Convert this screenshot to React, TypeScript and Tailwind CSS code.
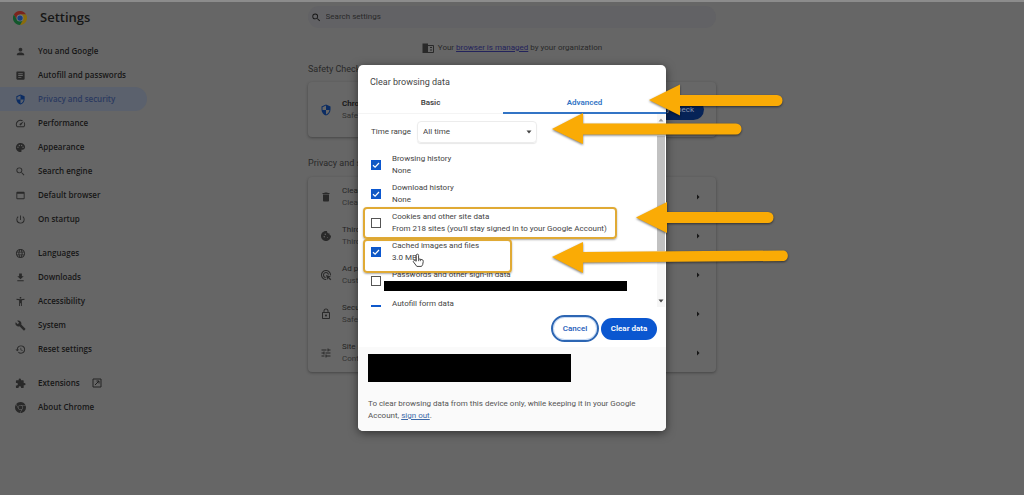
import type { ReactNode } from "react";
import type { IconType } from "react-icons";
import {
  MdAccessibilityNew,
  MdAdsClick,
  MdArrowRight,
  MdArticle,
  MdBuild,
  MdCookie,
  MdDelete,
  MdExtension,
  MdFileDownload,
  MdHistory,
  MdLanguage,
  MdLockOutline,
  MdPalette,
  MdPerson,
  MdPowerSettingsNew,
  MdSearch,
  MdSecurity,
  MdSpeed,
  MdTune,
  MdWebAsset,
} from "react-icons/md";
import { SiGooglechrome } from "react-icons/si";

type NavEntry = { label: string; icon: IconType; active?: boolean; external?: boolean };

const navGroups: NavEntry[][] = [
  [
    { label: "You and Google", icon: MdPerson },
    { label: "Autofill and passwords", icon: MdArticle },
    { label: "Privacy and security", icon: MdSecurity, active: true },
    { label: "Performance", icon: MdSpeed },
    { label: "Appearance", icon: MdPalette },
    { label: "Search engine", icon: MdSearch },
    { label: "Default browser", icon: MdWebAsset },
    { label: "On startup", icon: MdPowerSettingsNew },
  ],
  [
    { label: "Languages", icon: MdLanguage },
    { label: "Downloads", icon: MdFileDownload },
    { label: "Accessibility", icon: MdAccessibilityNew },
    { label: "System", icon: MdBuild },
    { label: "Reset settings", icon: MdHistory },
  ],
  [
    { label: "Extensions", icon: MdExtension, external: true },
    { label: "About Chrome", icon: SiGooglechrome },
  ],
];

const privacyRows = [
  { title: "Clear", text: "Clear", icon: MdDelete },
  { title: "Third", text: "Third", icon: MdCookie },
  { title: "Ad priv", text: "Custom", icon: MdAdsClick },
  { title: "Secur", text: "Safe", icon: MdLockOutline },
  { title: "Site s", text: "Contr", icon: MdTune },
];

const ChromeLogo = () => (
  <svg viewBox="0 0 48 48" className="size-[14px]" aria-hidden="true">
    <path d="M24 12H44.8A24 24 0 0 0 3.2 12L13.6 30Z" fill="#7b241d" />
    <path d="M34.4 30 24 48A24 24 0 0 0 44.8 12H24Z" fill="#8a6c0c" />
    <path d="M13.6 30 3.2 12A24 24 0 0 0 24 48L34.4 30Z" fill="#12572b" />
    <circle cx="24" cy="24" r="12" fill="#73777c" />
    <circle cx="24" cy="24" r="9" fill="#173f7c" />
  </svg>
);

const ExternalIcon = () => (
  <svg viewBox="0 0 10 10" className="size-[10px]" fill="none" stroke="#222222" aria-hidden="true">
    <path d="M1 1h8v8H1zM3 7l4-4M4.500 3H7v2.500" />
  </svg>
);

const BuildingIcon = () => (
  <svg viewBox="0 0 12 12" className="size-3" aria-hidden="true">
    <path d="M0.5 1.5H6V11H0.500z" fill="#292929" />
    <path d="M6 3.500h5.500V10.500H6M8 5.500h2M8 8h2" fill="none" stroke="#292929" />
  </svg>
);

const Sidebar = () => (
  <aside className="w-[308px] shrink-0">
    <div className="flex h-8 items-center gap-[13px] pl-[13px]">
      <ChromeLogo />
      <h1 className="font-['Open_Sans',sans-serif] text-[13px] font-semibold">Settings</h1>
    </div>
    <nav className="flex w-[147px] flex-col gap-[10px] pt-[5px]">
      {navGroups.map((group, i) => (
        <ul key={i}>
          {group.map(({ label, icon: Icon, active, external }) => (
            <li key={label}>
              <a
                href="#"
                className={
                  active
                    ? "flex h-6 items-center gap-3 rounded-r-xl bg-[#5b616d] pl-[15px] font-['Open_Sans',sans-serif] font-semibold text-[#2b3a60]"
                    : "flex h-6 items-center gap-3 pl-[15px] font-['Open_Sans',sans-serif] font-semibold"
                }
              >
                <Icon className={active ? "size-[11px] text-[#0b2c63]" : "size-[11px] text-[#292929]"} />
                {label}
                {external && <ExternalIcon />}
              </a>
            </li>
          ))}
        </ul>
      ))}
    </nav>
  </aside>
);

const Main = () => (
  <main className="w-[408px] shrink-0 pt-1">
    <label className="flex h-[22px] items-center gap-1 rounded-full bg-[#626265] pl-[3px]">
      <MdSearch className="size-[11px]" />
      <input
        type="text"
        placeholder="Search settings"
        aria-label="Search settings"
        className="w-full bg-transparent outline-none placeholder:text-[#292929]"
      />
    </label>
    <p className="flex h-[35px] justify-center gap-1 pt-[14px] leading-3 text-[#292929]">
      <BuildingIcon />
      <span>
        Your{" "}
        <a href="#" className="text-[#23235c] underline">
          browser is managed
        </a>{" "}
        by your organization
      </span>
    </p>
    <h2 className="pb-[7px] text-[9px] leading-3 text-[#292929]">Safety Check</h2>
    <section className="flex h-[55px] items-center gap-[10px] rounded bg-[#676767] px-3 shadow-[0_1px_3px_#00000055]">
      <MdSecurity className="size-3 text-[#0b2c63]" />
      <div className="leading-3">
        <h3 className="font-semibold">Chro</h3>
        <p className="text-[#333333]">Safe</p>
      </div>
      <button className="ml-auto h-[21px] rounded-full bg-[#062357] px-[10px] text-[#8994ac]">Safety Check</button>
    </section>
    <h2 className="pt-5 pb-2 text-[9px] leading-3 text-[#292929]">Privacy and s</h2>
    <section className="rounded bg-[#676767] shadow-[0_1px_3px_#00000055]">
      {privacyRows.map(({ title, text, icon: Icon }) => (
        <a href="#" key={title} className="flex h-[39px] items-center gap-[10px] px-3">
          <Icon className="size-3 text-[#292929]" />
          <div className="leading-3">
            <h3 className="text-[#242424]">{title}</h3>
            <p className="text-[#333333]">{text}</p>
          </div>
          <MdArrowRight className="ml-auto size-3" />
        </a>
      ))}
    </section>
  </main>
);

type DataRowProps = { label: string; detail?: string; checked?: boolean; children?: ReactNode };

const DataRow = ({ label, detail, checked, children }: DataRowProps) => (
  <li className="relative h-[29px]">
    <label className="flex items-center gap-[11px]">
      <span className="grid size-[10px] shrink-0">
        <input
          type="checkbox"
          defaultChecked={checked}
          className="peer col-start-1 row-start-1 size-[10px] appearance-none border border-[#555555] checked:border-[#0b57d0] checked:bg-[#1259c3]"
        />
        <svg
          viewBox="0 0 10 10"
          className="pointer-events-none col-start-1 row-start-1 hidden size-[10px] peer-checked:block"
          aria-hidden="true"
        >
          <path d="M2 5.2 4.1 7.2 8 3" fill="none" stroke="white" strokeWidth="1.2" />
        </svg>
      </span>
      <span className="flex h-6 flex-col leading-3">
        <span>{label}</span>
        {detail && <span>{detail}</span>}
      </span>
    </label>
    {children}
  </li>
);

const Dialog = () => (
  <div
    role="dialog"
    aria-label="Clear browsing data"
    className="overflow-hidden rounded-[5px] bg-white text-[#444444] shadow-[0_2px_10px_#00000088]"
  >
    <h2 className="pt-[10px] pl-3 text-[9px] leading-[14px]">Clear browsing data</h2>
    <div role="tablist" className="flex pt-1">
      <button role="tab" className="h-[21px] w-[145px] border-b border-[#f4f4f4] font-semibold">
        Basic
      </button>
      <button
        role="tab"
        aria-selected="true"
        className="h-[21px] flex-1 border-b-2 border-[#3274c5] font-semibold text-[#3274c5]"
      >
        Advanced
      </button>
    </div>
    <div className="flex h-[193px]">
      <div className="flex-1 overflow-hidden pt-[7px] pl-[13px]">
        <div className="flex items-center gap-[6px]">
          <label htmlFor="range">Time range</label>
          <span className="grid w-[120px] items-center">
            <select
              id="range"
              className="col-start-1 row-start-1 h-[22px] appearance-none rounded-sm border border-[#ececec] px-[5px] shadow-[0_1px_1px_#00000018]"
            >
              <option>All time</option>
            </select>
            <svg
              viewBox="0 0 6 4"
              className="pointer-events-none col-start-1 row-start-1 mr-[5px] h-1 w-[6px] justify-self-end"
              aria-hidden="true"
            >
              <path d="M0.5 0.5h5L3 3.5z" fill="#444444" />
            </svg>
          </span>
        </div>
        <ul className="pt-[10px]">
          <DataRow label="Browsing history" detail="None" checked />
          <DataRow label="Download history" detail="None" checked />
          <DataRow
            label="Cookies and other site data"
            detail="From 218 sites (you'll stay signed in to your Google Account)"
          />
          <DataRow label="Cached images and files" detail="3.0 MB" checked />
          <DataRow label="Passwords and other sign-in data">
            <div className="absolute top-3 left-[13px] h-[10px] w-[243px] bg-black" />
          </DataRow>
          <DataRow label="Autofill form data" checked />
        </ul>
      </div>
      <div className="mr-px flex w-2 flex-col items-center justify-between bg-[#f6f6f6]">
        <svg viewBox="0 0 6 4" className="my-1 h-1 w-[6px]" aria-hidden="true">
          <path d="M0.5 3.5h5L3 0.5z" fill="#999999" />
        </svg>
        <div className="mt-[10px] mb-auto h-[115px] w-full bg-[#c1c1c1]" />
        <svg viewBox="0 0 6 4" className="my-1 h-1 w-[6px]" aria-hidden="true">
          <path d="M0.5 0.5h5L3 3.5z" fill="#444444" />
        </svg>
      </div>
    </div>
    <div className="flex items-center justify-end gap-[2px] pt-2 pr-[9px] pb-[5px]">
      <button className="h-[27px] w-12 rounded-full border-2 border-[#2d66b3] font-medium text-[#1c5ab8] shadow-[inset_0_0_0_1px_#c9dcf5]">
        Cancel
      </button>
      <button className="h-[22px] w-14 rounded-full bg-[#0b57d0] font-semibold text-white">Clear data</button>
    </div>
    <footer className="bg-[#fafafa] px-[10px] pt-[7px] pb-[9px]">
      <div className="h-7 w-[203px] bg-black" />
      <p className="pt-4 leading-3 text-[#555555]">
        To clear browsing data from this device only, while keeping it in your Google
        <br />
        Account,{" "}
        <a href="#" className="text-[#3d6aa8] underline">
          sign out
        </a>
        .
      </p>
    </footer>
  </div>
);

// Callouts are placed from the dialog's top left corner.
const Callouts = () => (
  <>
    <div className="absolute top-[142px] left-[5px] h-8 w-[254px] rounded border-2 border-[#e0aa35] shadow-[0_1px_2px_#00000055]" />
    <div className="absolute top-[174px] left-[5px] h-[34px] w-[149px] rounded border-2 border-[#e0aa35] shadow-[0_1px_2px_#00000055]" />
    <svg
      viewBox="358 65 450 230"
      className="pointer-events-none absolute top-0 left-0 h-[230px] w-[450px] max-w-none drop-shadow-[0_1px_1px_#00000088]"
      fill="#faab05"
      aria-hidden="true"
    >
      <path d="M649 100 680 84.500V95H777a5.500 5.500 0 0 1 0 11H680v9.500Z" />
      <path d="M552 129 583 113V123.500H736a5.500 5.500 0 0 1 0 11H583V144Z" />
      <path d="M636 217.500 667 202V212H768a5.500 5.500 0 0 1 0 11H667v10Z" />
      <path d="M552 257 583 242V252L784 250.500a5.500 5.500 0 0 1 0 10.500L583 262.500V273Z" />
    </svg>
    <svg viewBox="0 0 24 24" className="absolute top-[188px] left-[53px] size-[14px]" aria-hidden="true">
      <path
        d="M9 14V4a2 2 0 0 1 4 0v6l6 1.500a2.500 2.500 0 0 1 2 3L20 20l-2 3h-8l-6-8a2 2 0 0 1 3-2z"
        fill="white"
        stroke="#444444"
        strokeWidth="1.700"
      />
      <path d="M13 10v4M16 11v3" stroke="#444444" strokeWidth="1.500" />
    </svg>
  </>
);

export default function App() {
  return (
    <div className="relative min-h-screen overflow-hidden border-t-2 border-[#8c8c8c] bg-[#666666] font-[Roboto,sans-serif] text-[8px] text-[#161616]">
      <div className="flex">
        <Sidebar />
        <Main />
      </div>
      <div className="absolute inset-0 flex items-start justify-center pt-[63px]">
        <div className="relative w-[308px]">
          <Dialog />
          <Callouts />
        </div>
      </div>
    </div>
  );
}
